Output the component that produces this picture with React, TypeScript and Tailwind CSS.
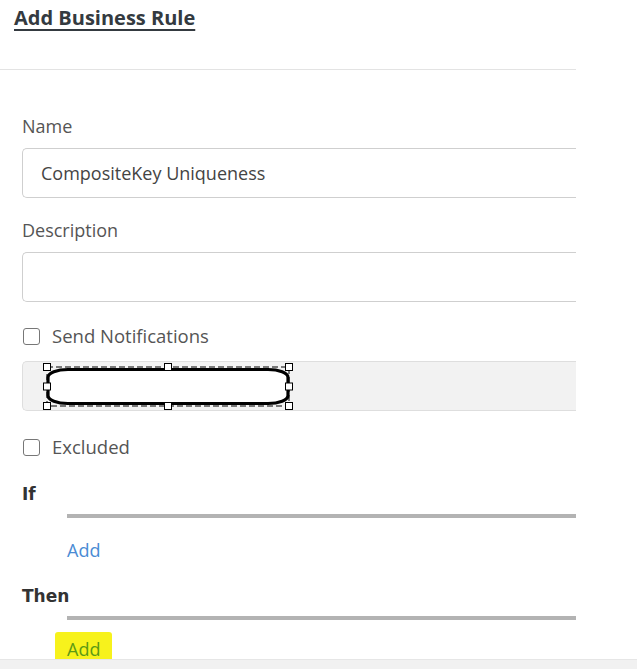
import React from "react";

function Checkbox({ label }: { label: string }) {
  return (
    <label className="flex h-[24px] items-center gap-[12px]">
      <span className="mt-[1px] ml-[1px] h-[17px] w-[17px] rounded-[3px] border border-[#777] bg-white" />
      <span className="text-[18.5px] leading-[24px] text-[#555]">{label}</span>
    </label>
  );
}

function SelectedShape() {
  const handles = [
    [4, 4],
    [125, 4],
    [246, 4],
    [4, 23.5],
    [246, 23.5],
    [4, 43],
    [125, 43],
    [246, 43],
  ];
  return (
    <svg width="250" height="48" viewBox="0 0 250 48" className="block">
      <rect x="4" y="4" width="242" height="39" fill="none" stroke="#000" strokeWidth="1" strokeDasharray="6 3" />
      <rect x="5" y="6.5" width="240" height="34" rx="20" ry="8" fill="#fff" stroke="#000" strokeWidth="3.2" />
      {handles.map(([x, y], i) => (
        <rect key={i} x={x - 3.5} y={y - 3.5} width="7" height="7" fill="#fff" stroke="#000" strokeWidth="1" />
      ))}
    </svg>
  );
}

export default function App() {
  return (
    <div className="flex h-[669px] w-[637px] flex-col bg-white font-['Open_Sans',sans-serif]">
      <div className="h-[659px]">
        <div className="h-[70px] w-[576px] border-b border-[#e3e3e3] pl-[14px] pt-[5px]">
          <h1 className="text-[20px] font-bold leading-[26px] text-[#343a40] underline decoration-[2px] underline-offset-[4px]">
            Add Business Rule
          </h1>
        </div>

        <div className="pl-[22px]">
          <div className="mt-[44px] text-[18px] leading-[24px] text-[#555]">Name</div>
          <div className="mt-[10px] flex h-[50px] w-[554px] items-center rounded-l-[5px] border border-r-0 border-[#cfcfcf] pl-[18px] text-[18px] text-[#444]">
            CompositeKey Uniqueness
          </div>

          <div className="mt-[20px] text-[18px] leading-[24px] text-[#555]">Description</div>
          <div className="mt-[10px] h-[50px] w-[554px] rounded-l-[5px] border border-r-0 border-[#cfcfcf]" />

          <div className="mt-[22px]">
            <Checkbox label="Send Notifications" />
          </div>

          <div className="mt-[13px] h-[50px] w-[554px] rounded-l-[5px] border border-r-0 border-[#dedede] bg-[#f2f2f2] pl-[20px] pt-[1px]">
            <SelectedShape />
          </div>

          <div className="mt-[24px]">
            <Checkbox label="Excluded" />
          </div>

          <div className="mt-[23px] font-['DejaVu_Sans',sans-serif] text-[17px] font-bold leading-[24px] text-[#333]">If</div>
          <div className="ml-[45px] mt-[8px] h-[4px] w-[509px] bg-[#b3b3b3]" />
          <div className="ml-[45px] mt-[20px] text-[18px] leading-[24px] text-[#4a8bd4]">Add</div>

          <div className="mt-[22px] font-['DejaVu_Sans',sans-serif] text-[17px] font-bold leading-[24px] text-[#333]">Then</div>
          <div className="ml-[45px] mt-[8px] h-[4px] w-[509px] bg-[#b3b3b3]" />
          <div className="ml-[33px] mt-[12px] inline-block rounded-[3px] bg-[#f7f21c] px-[12px] pb-[6px] pt-[5px] text-[18px] leading-[24px] text-[#5d9a14]">
            Add
          </div>
        </div>
      </div>
      <div className="flex-1 border-t border-[#e6e6e6] bg-[#f1f1f1]" />
    </div>
  );
}
